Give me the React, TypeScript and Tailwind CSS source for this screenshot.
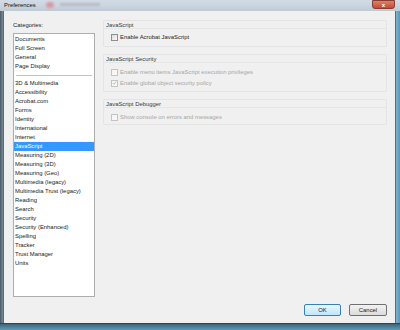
const topItems = ["Documents", "Full Screen", "General", "Page Display"];
const items = [
  "3D & Multimedia",
  "Accessibility",
  "Acrobat.com",
  "Forms",
  "Identity",
  "International",
  "Internet",
  "JavaScript",
  "Measuring (2D)",
  "Measuring (3D)",
  "Measuring (Geo)",
  "Multimedia (legacy)",
  "Multimedia Trust (legacy)",
  "Reading",
  "Search",
  "Security",
  "Security (Enhanced)",
  "Spelling",
  "Tracker",
  "Trust Manager",
  "Units",
];

const Check = ({ checked = false, disabled = false }: { checked?: boolean; disabled?: boolean }) => (
  <span
    className={`w-[7px] h-[7px] shrink-0 flex items-center justify-center border bg-gradient-to-br ${
      disabled ? "border-[#c4c4c4] from-[#f4f4f4] to-[#fafafa]" : "border-[#8e8f8f] from-[#dcdcdc] to-[#f8f8f8]"
    }`}
  >
    {checked && (
      <svg viewBox="0 0 8 8" className="w-[6px] h-[6px]">
        <path d="M1.2 4.2 L3.1 6.1 L6.8 1.6" fill="none" stroke="#a8a8a8" strokeWidth="1.1" />
      </svg>
    )}
  </span>
);

const Row = ({ label, checked, disabled }: { label: string; checked?: boolean; disabled?: boolean }) => (
  <div className="h-[8px] flex items-center gap-[2px] pl-[7px]">
    <Check checked={checked} disabled={disabled} />
    <span className={disabled ? "text-[#a6a6a6]" : "text-[#1e1e1e]"}>{label}</span>
  </div>
);

const Section = ({ title, children, className }: { title: string; children: React.ReactNode; className: string }) => (
  <div className={`border border-[#e4e4e4] rounded-[1px] ${className}`}>
    <div className="h-[8px] leading-[8px] pl-[2px] text-[#3a3a3a] border-b border-[#e6e6e6]">{title}</div>
    {children}
  </div>
);

export default function App() {
  return (
    <div
      className="w-[400px] h-[330px] flex flex-col overflow-hidden text-[5.9px] leading-[9px]"
      style={{ fontFamily: '"Liberation Sans", Arial, sans-serif' }}
    >
      {/* title bar */}
      <div className="h-[11px] shrink-0 flex items-start bg-gradient-to-b from-[#d3dce6] via-[#cbd5df] to-[#bfcad6] relative">
        <span className="pl-[4px] pt-[1px] leading-[8px] text-[#111]">Preferences</span>
        <span className="ml-[10px] mt-[2px] w-[8px] h-[6px] rounded-full bg-[#d99aa4] blur-[1px]" />
        <span className="ml-[6px] mt-[3px] w-[40px] h-[3px] bg-[#b7bcc6] blur-[1px]" />
        <span className="ml-auto mr-[5px] w-[23px] h-[9px] rounded-b-[3px] bg-gradient-to-b from-[#e0806a] to-[#c24a34] border border-[#8a3c30] flex items-center justify-center text-white text-[6px] leading-none font-bold">
          x
        </span>
      </div>

      <div className="flex-1 flex min-h-0">
        <div className="w-[4px] bg-gradient-to-r from-[#4a5966] to-[#7d8f9c] border-r border-[#5c6b76]" />
        <div className="flex-1 bg-[#f0f0f0] flex flex-col pl-[9px] pr-[8px] pt-[8px]">
          <div className="flex gap-[8px]">
            {/* categories */}
            <div className="w-[82px] flex flex-col">
              <div className="h-[10px] leading-[10px] text-[#222] mt-[1px]">Categories:</div>
              <div className="mt-[3px] h-[264px] bg-white border border-[#adadad] pt-[1px]">
                {topItems.map((t) => (
                  <div key={t} className="h-[9px] leading-[9px] pl-[1px] text-[#1a1a1a]">
                    {t}
                  </div>
                ))}
                <div className="h-[8px] flex items-center px-[2px]">
                  <div className="w-full h-px bg-[#a9c6e4]" />
                </div>
                {items.map((t) =>
                  t === "JavaScript" ? (
                    <div key={t} className="h-[9px] leading-[9px] pl-[1px] bg-[#3399ff] text-white">
                      {t}
                    </div>
                  ) : (
                    <div key={t} className="h-[9px] leading-[9px] pl-[1px] text-[#1a1a1a]">
                      {t}
                    </div>
                  )
                )}
              </div>
            </div>

            {/* right panel */}
            <div className="flex-1 flex flex-col">
              <Section title="JavaScript" className="mt-[1px] pt-0 pb-[5px]">
                <div className="pt-[4px]">
                  <Row label="Enable Acrobat JavaScript" />
                </div>
              </Section>
              <Section title="JavaScript Security" className="mt-[7px] pb-[4px]">
                <div className="pt-[5px] flex flex-col gap-[3px]">
                  <Row label="Enable menu items JavaScript execution privileges" disabled />
                  <Row label="Enable global object security policy" checked disabled />
                </div>
              </Section>
              <Section title="JavaScript Debugger" className="mt-[7px] pb-[3px]">
                <div className="pt-[5px]">
                  <Row label="Show console on errors and messages" disabled />
                </div>
              </Section>
            </div>
          </div>

          <div className="mt-[7px] flex justify-end gap-[8px]">
            <button className="w-[37px] h-[12px] rounded-[2px] border border-[#3c7fb1] bg-gradient-to-b from-[#eaf6fd] to-[#bee6fd] text-[#1a1a1a] leading-[10px]">
              OK
            </button>
            <button className="w-[38px] h-[12px] rounded-[2px] border border-[#707070] bg-gradient-to-b from-[#f2f2f2] to-[#dcdcdc] text-[#1a1a1a] leading-[10px]">
              Cancel
            </button>
          </div>
        </div>
        <div className="w-[5px] bg-gradient-to-r from-[#7fb3cf] to-[#5c95b6] border-l border-[#4b6f86]" />
      </div>

      <div className="h-[7px] shrink-0 bg-gradient-to-b from-[#3f6578] to-[#5e9db8] border-t border-[#2f4350]" />
    </div>
  );
}
